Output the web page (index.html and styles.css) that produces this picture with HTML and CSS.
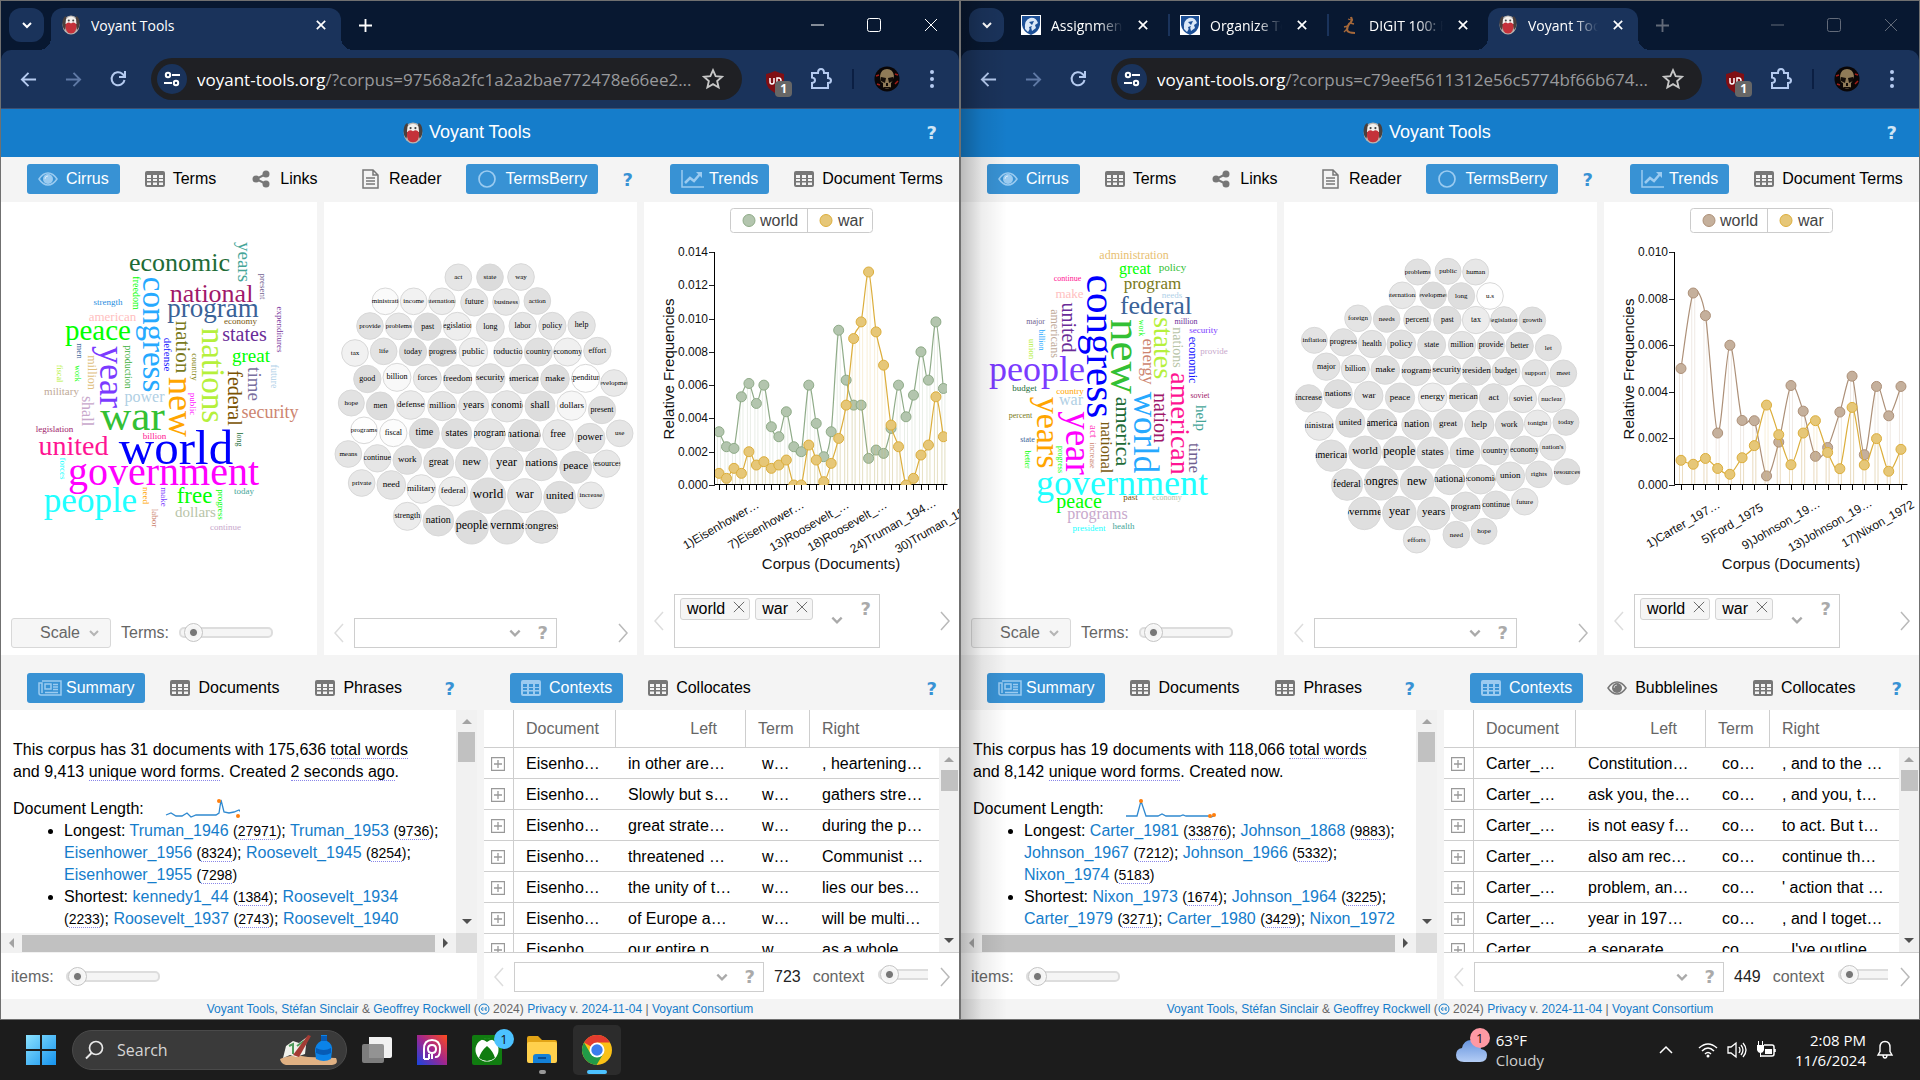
FILE: index.html
```html
<!DOCTYPE html>
<html lang="en">
<head>
<meta charset="utf-8">
<title>Voyant Tools</title>
<link rel="stylesheet" href="styles.css">
</head>
<body>
<svg class="sprite" aria-hidden="true">
  <symbol id="voyant" viewBox="0 0 20 20"><ellipse cx="10" cy="10" rx="8.500" ry="9.500" fill="#b9b4b0"/><path d="M5 1Q2 2 1.500 7T4 15L6 7zM15 1q3 1 3.500 6T16 15L14 7z" fill="#4a403d"/><path d="M5 4Q10-1 15 4L15.500 9h-11z" fill="#f4f1ee"/><path d="M4.500 9.500Q7 6 10 8.500 13 6 15.500 9.500 16 18.500 10 18.500 4 18.500 4.500 9.500z" fill="#c4313a"/><circle cx="7.800" cy="5.500" r="1" fill="#444"/><circle cx="12.200" cy="5.500" r="1" fill="#444"/></symbol>
  <symbol id="lion" viewBox="0 0 20 20"><path d="M0 0h20v20H0z" fill="#fff"/><path d="M1 1h18v9q-1 7-9 10Q2 17 1 10z" fill="#1c4f96"/><path d="M4 14Q3 5 9 3q6-1 8 5l-3 2 1 3-4 3-1-4-3 5z" fill="#dbe8f7"/><path d="M8 7l5-1-2 4zM8 12l3-1-2 4z" fill="#1c4f96"/></symbol>
  <symbol id="lizard" viewBox="0 0 20 20"><path d="M12 2l1 3q-1 3-3 4-2 3-2 6 1 3 8 3" fill="none" stroke="#a5683a" stroke-width="2.200"/><path d="M12 5l-3-1M11 8l4 1M9 11l-4 1M8 14l-3 3" fill="none" stroke="#a5683a" stroke-width="1.300"/></symbol>
  <symbol id="down" viewBox="0 0 12 12"><path d="M2 4l4 4 4-4" fill="none" stroke="currentColor" stroke-width="2"/></symbol>
  <symbol id="x" viewBox="0 0 12 12"><path d="M1 1l10 10M11 1L1 11" fill="none" stroke="currentColor" stroke-width="2"/></symbol>
  <symbol id="xthin" viewBox="0 0 14 14"><path d="M1 1l12 12M13 1L1 13" fill="none" stroke="currentColor"/></symbol>
  <symbol id="plus" viewBox="0 0 14 14"><path d="M7 0v14M0 7h14" fill="none" stroke="currentColor" stroke-width="2"/></symbol>
  <symbol id="min" viewBox="0 0 14 14"><path d="M1 7h13" stroke="currentColor"/></symbol>
  <symbol id="max" viewBox="0 0 14 14"><rect x=".5" y=".5" width="13" height="13" rx="2" fill="none" stroke="currentColor"/></symbol>
  <symbol id="back" viewBox="0 0 18 18"><path d="M17 9H2M9 2L2 9l7 7" fill="none" stroke="currentColor" stroke-width="2"/></symbol>
  <symbol id="fwd" viewBox="0 0 18 18"><path d="M1 9h15M9 2l7 7-7 7" fill="none" stroke="currentColor" stroke-width="2"/></symbol>
  <symbol id="reload" viewBox="0 0 18 18"><path d="M15.500 10a6.500 6.500 0 1 1-2-6l3 3M16 1v6h-6" fill="none" stroke="currentColor" stroke-width="2"/></symbol>
  <symbol id="tune" viewBox="0 0 18 18"><g fill="none" stroke="currentColor" stroke-width="2"><circle cx="5" cy="5" r="2.200"/><path d="M9 5h8M1 13h8"/><circle cx="13" cy="13" r="2.200"/></g></symbol>
  <symbol id="star" viewBox="0 0 20 20"><path d="M10 2l2.400 5.400 5.800.6-4.400 3.900 1.300 5.800L10 14.700l-5.100 3 1.300-5.800L1.800 8l5.800-.6z" fill="none" stroke="currentColor" stroke-width="1.700"/></symbol>
  <symbol id="ublock" viewBox="0 0 28 28"><path d="M11 2q4 2 9 3v7q0 7-9 12-9-5-9-12V5q5-1 9-3z" fill="#800f14"/><path d="M6 9v4q0 2 2 2t2-2V9M13 15V9h2q2 0 2 3" fill="none" stroke="#fff" stroke-width="1.500"/><rect x="11" y="12" width="17" height="16" rx="4" fill="#666"/></symbol>
  <symbol id="puzzle" viewBox="0 0 22 22"><path d="M2 5h6q0-4 3-4t3 4h4v5q3 0 3 2.500T18 15v5H2v-5q3-.3 3-2.700T2 9.500z" fill="none" stroke="currentColor" stroke-width="2"/></symbol>
  <symbol id="skull" viewBox="0 0 26 26"><circle cx="13" cy="13" r="12.500" fill="#0a0606"/><path d="M6 10Q7 3 13 3t7 7l-2 6-1 1v4q-4 3-8 0v-4l-2-1z" fill="#8f7b58"/><path d="M7 11l5 1-1 5-4-2zM19 11l-5 1 1 5 4-2zM12 17h2v3h-2zM10 21h6v1h-6z" fill="#120c08"/><path d="M2 10l3-1M3 18l3 1M21 18l3-3M21 8l3 1" stroke="#a01c18" stroke-width="1.500"/></symbol>
  <symbol id="dots" viewBox="0 0 6 20"><g fill="currentColor"><circle cx="3" cy="3" r="2"/><circle cx="3" cy="10" r="2"/><circle cx="3" cy="17" r="2"/></g></symbol>
  <symbol id="eye" viewBox="0 0 20 16"><path d="M1 8q4-6 9-6t9 6q-4 6-9 6T1 8z" fill="none" stroke="currentColor" stroke-width="1.500"/><circle cx="10" cy="8" r="5" fill="currentColor"/><path d="M7 8q0-3 3-3" fill="none" stroke="#fff" stroke-opacity=".6"/></symbol>
  <symbol id="grid" viewBox="0 0 20 16"><path d="M2 0h16q2 0 2 2v12q0 2-2 2H2q-2 0-2-2V2Q0 0 2 0zM2 4v3h4V4zm6 0v3h4V4zm6 0v3h4V4zM2 8v2h4V8zm6 0v2h4V8zm6 0v2h4V8zM2 11.500V14h4v-2.500zm6 0V14h4v-2.500zm6 0V14h4v-2.500z" fill="currentColor" fill-rule="evenodd"/></symbol>
  <symbol id="share" viewBox="0 0 20 18"><g fill="currentColor"><circle cx="4" cy="9" r="3.500"/><circle cx="14" cy="4" r="3.500"/><circle cx="14" cy="14" r="3.500"/></g><path d="M14 4L4 9l10 5" fill="none" stroke="currentColor" stroke-width="2"/></symbol>
  <symbol id="doc" viewBox="0 0 20 20"><path d="M2 1h10l5 5v13H2zM12 1v5h5M5 9h9M5 12h9M5 15h9" fill="none" stroke="currentColor" stroke-width="1.500"/></symbol>
  <symbol id="ring" viewBox="0 0 20 20"><circle cx="10" cy="10" r="8" fill="none" stroke="currentColor" stroke-width="1.700"/></symbol>
  <symbol id="trend" viewBox="0 0 24 18"><path d="M1 0v17h22" fill="none" stroke="currentColor" stroke-width="1.500"/><path d="M4 13l5-5 4 3 6-7" fill="none" stroke="currentColor" stroke-width="2.500"/><path d="M15 2h6v6z" fill="currentColor"/></symbol>
  <symbol id="news" viewBox="0 0 24 16"><path d="M4 1h19v14H3q-2 0-2-2V3h3v10M7 4h6v5H7zM15 4.500h5M15 7h5M15 9.500h5M7 12.500h13" fill="none" stroke="currentColor" stroke-width="1.500"/></symbol>
  <symbol id="prev" viewBox="0 0 10 20"><path d="M9 1L1 10l8 9" fill="none" stroke="currentColor" stroke-width="1.500"/></symbol>
  <symbol id="next" viewBox="0 0 10 20"><path d="M1 1l8 9-8 9" fill="none" stroke="currentColor" stroke-width="1.500"/></symbol>
  <symbol id="cc" viewBox="0 0 12 12"><circle cx="6" cy="6" r="5" fill="none" stroke="currentColor"/><path d="M5.500 5q-2-1-2 1t2 1M9 5Q7 4 7 6t2 1" fill="none" stroke="currentColor"/></symbol>
  <symbol id="expand" viewBox="0 0 14 14"><path d="M.5.500h13v13H.5zM7 3v8M3 7h8" fill="none" stroke="#999" stroke-width="1.300"/></symbol>
</svg>

<div class="desktop">
<section class="window" aria-label="Voyant Tools, Eisenhower to Truman corpus">
  <header class="strip">
    <button class="tab-search" aria-label="Search tabs"><svg width="12" height="12"><use href="#down"/></svg></button>
    <div class="tab active wide"><svg width="20" height="20"><use href="#voyant"/></svg><span class="tab-title">Voyant Tools</span><button aria-label="Close tab"><svg width="10" height="10"><use href="#x"/></svg></button></div>
    <button class="new-tab" aria-label="New tab"><svg width="13" height="13"><use href="#plus"/></svg></button>
    <div class="controls"><button aria-label="Minimize"><svg width="14" height="14"><use href="#min"/></svg></button><button aria-label="Maximize"><svg width="14" height="14"><use href="#max"/></svg></button><button aria-label="Close"><svg width="14" height="14"><use href="#xthin"/></svg></button></div>
  </header>
  <div class="navbar">
    <button aria-label="Back"><svg width="17" height="17"><use href="#back"/></svg></button>
    <button class="dim" aria-label="Forward"><svg width="17" height="17"><use href="#fwd"/></svg></button>
    <button aria-label="Reload"><svg width="18" height="18"><use href="#reload"/></svg></button>
    <div class="address"><span class="site"><svg width="18" height="18"><use href="#tune"/></svg></span><span class="url"><b>voyant-tools.org</b>/?corpus=97568a2fc1a2a2bae772478e66ee2...</span><svg class="fav" width="22" height="22"><use href="#star"/></svg></div>
    <div class="extensions"><span class="ublock"><svg width="28" height="28"><use href="#ublock"/></svg><i>1</i></span><svg width="22" height="22"><use href="#puzzle"/></svg><span class="rule"></span><svg width="26" height="26"><use href="#skull"/></svg><svg width="6" height="20"><use href="#dots"/></svg></div>
  </div>
  <div class="banner"><h1><svg width="22" height="22"><use href="#voyant"/></svg>Voyant Tools</h1><button class="help" aria-label="Help">?</button></div>
  <div class="page">
    <div class="row three">
      <div class="pane">
        <nav class="tools"><button class="on"><svg width="20" height="16"><use href="#eye"/></svg>Cirrus</button><button><svg width="20" height="16"><use href="#grid"/></svg>Terms</button><button><svg width="20" height="18"><use href="#share"/></svg>Links</button></nav>
        <div class="panel"><svg class="view cloud" viewBox="1 2 316 404" preserveAspectRatio="xMinYMin meet" data-cloud="left"></svg>
          <div class="bar"><button class="scale">Scale<svg width="12" height="12"><use href="#down"/></svg></button><label for="t1">Terms:</label><input class="terms" id="t1" type="range" value="4"></div></div>
      </div>
      <div class="pane">
        <nav class="tools full"><button><svg width="20" height="20"><use href="#doc"/></svg>Reader</button><button class="on"><svg width="20" height="20"><use href="#ring"/></svg>TermsBerry</button><button class="help" aria-label="Help">?</button></nav>
        <div class="panel"><svg class="view berry" viewBox="4 -38 313 404" preserveAspectRatio="xMinYMin meet" data-berry="left"></svg>
          <div class="bar"><button class="page-btn faint" aria-label="Previous"><svg width="10" height="20"><use href="#prev"/></svg></button><div class="combo mid"><input aria-label="Search terms"><svg width="14" height="14"><use href="#down"/></svg><b>?</b></div><button class="page-btn end" aria-label="Next"><svg width="10" height="20"><use href="#next"/></svg></button></div></div>
      </div>
      <div class="pane">
        <nav class="tools"><button class="on big"><svg width="24" height="18"><use href="#trend"/></svg>Trends</button><button><svg width="20" height="16"><use href="#grid"/></svg>Document Terms</button></nav>
        <div class="panel"><svg class="view chart" viewBox="4 2 315 380" preserveAspectRatio="xMinYMin meet" data-chart="left"></svg>
          <div class="bar tall"><button class="page-btn faint" aria-label="Previous"><svg width="10" height="20"><use href="#prev"/></svg></button><div class="combo tags"><span>world<svg width="12" height="12"><use href="#xthin"/></svg></span><span>war<svg width="12" height="12"><use href="#xthin"/></svg></span><input aria-label="Add term"><svg class="drop" width="14" height="14"><use href="#down"/></svg><b>?</b></div><button class="page-btn end" aria-label="Next"><svg width="10" height="20"><use href="#next"/></svg></button></div></div>
      </div>
    </div>
    <div class="row two">
      <div class="pane">
        <nav class="tools low"><button class="on big"><svg width="24" height="16"><use href="#news"/></svg>Summary</button><button><svg width="20" height="16"><use href="#grid"/></svg>Documents</button><button><svg width="20" height="16"><use href="#grid"/></svg>Phrases</button><button class="help" aria-label="Help">?</button></nav>
        <div class="panel">
          <div class="scroller"><div class="summary">
            <p>This corpus has 31 documents with 175,636 <u>total words</u> and 9,413 <u>unique word forms</u>. Created <u>2 seconds ago</u>.</p>
            <div>Document Length: <svg class="spark" width="78" height="22"><path d="M4 17l5-2 5 3h6l5-3 4 4 5-2h20l3-2 2-13 3 12 5 1 5-1 5-2 3 3" fill="none" stroke="#2f89d0" stroke-width="1.300"/><circle cx="57" cy="3" r="2" fill="#ff7f0e"/><circle cx="76" cy="18" r="2" fill="#ff7f0e"/></svg></div>
            <ul><li>Longest: <a href="#">Truman_1946</a> <small>(<u>27971</u>)</small>; <a href="#">Truman_1953</a> <small>(<u>9736</u>)</small>; <a href="#">Eisenhower_1956</a> <small>(<u>8324</u>)</small>; <a href="#">Roosevelt_1945</a> <small>(<u>8254</u>)</small>; <a href="#">Eisenhower_1955</a> <small>(<u>7298</u>)</small></li>
            <li>Shortest: <a href="#">kennedy1_44</a> <small>(<u>1384</u>)</small>; <a href="#">Roosevelt_1934</a> <small>(<u>2233</u>)</small>; <a href="#">Roosevelt_1937</a> <small>(<u>2743</u>)</small>; <a href="#">Roosevelt_1940</a></li></ul>
          </div><div class="vscroll"><i class="up"></i><span></span><i class="dn"></i></div><div class="hscroll"><i class="lt"></i><span></span><i class="rt"></i></div><div class="corner"></div></div>
          <div class="bar"><label for="i1">items:</label><input class="items" id="i1" type="range" value="0"></div></div>
      </div>
      <div class="pane">
        <nav class="tools low"><button class="on"><svg width="20" height="16"><use href="#grid"/></svg>Contexts</button><button><svg width="20" height="16"><use href="#grid"/></svg>Collocates</button><button class="help" aria-label="Help">?</button></nav>
        <div class="panel">
          <div class="records"><table><thead><tr><th class="c0"></th><th class="c1">Document</th><th class="c2">Left</th><th class="c3">Term</th><th>Right</th></tr></thead><tbody>
            <tr><td><svg width="14" height="14"><use href="#expand"/></svg></td><td>Eisenho…</td><td>in other are…</td><td>w…</td><td>, heartening…</td></tr>
            <tr><td><svg width="14" height="14"><use href="#expand"/></svg></td><td>Eisenho…</td><td>Slowly but s…</td><td>w…</td><td>gathers stre…</td></tr>
            <tr><td><svg width="14" height="14"><use href="#expand"/></svg></td><td>Eisenho…</td><td>great strate…</td><td>w…</td><td>during the p…</td></tr>
            <tr><td><svg width="14" height="14"><use href="#expand"/></svg></td><td>Eisenho…</td><td>threatened …</td><td>w…</td><td>Communist …</td></tr>
            <tr><td><svg width="14" height="14"><use href="#expand"/></svg></td><td>Eisenho…</td><td>the unity of t…</td><td>w…</td><td>lies our bes…</td></tr>
            <tr><td><svg width="14" height="14"><use href="#expand"/></svg></td><td>Eisenho…</td><td>of Europe a…</td><td>w…</td><td>will be multi…</td></tr>
            <tr><td><svg width="14" height="14"><use href="#expand"/></svg></td><td>Eisenho…</td><td>our entire p…</td><td>w…</td><td>as a whole…</td></tr>
          </tbody></table><div class="vscroll over"><i class="up"></i><span></span><i class="dn"></i></div></div>
          <div class="bar"><button class="page-btn faint" aria-label="Previous"><svg width="10" height="20"><use href="#prev"/></svg></button><div class="combo long"><input aria-label="Search contexts"><svg width="14" height="14"><use href="#down"/></svg><b>?</b></div><span class="count">723</span><label for="c1">context</label><span class="clip"><input id="c1" type="range" value="0"></span><button class="page-btn end" aria-label="Next"><svg width="10" height="20"><use href="#next"/></svg></button></div></div>
      </div>
    </div>
    <footer><a href="#">Voyant Tools</a>, <a href="#">Stéfan Sinclair</a> &amp; <a href="#">Geoffrey Rockwell</a> (<a href="#" aria-label="Creative Commons"><svg width="12" height="12"><use href="#cc"/></svg></a> 2024) <a href="#">Privacy</a> v. <a href="#">2024-11-04</a> | <a href="#">Voyant Consortium</a></footer>
  </div>
</section>

<section class="window inactive" aria-label="Voyant Tools, Carter to Nixon corpus">
  <header class="strip">
    <button class="tab-search" aria-label="Search tabs"><svg width="12" height="12"><use href="#down"/></svg></button>
    <div class="tab"><svg width="20" height="20"><use href="#lion"/></svg><span class="tab-title">Assignments</span><button aria-label="Close tab"><svg width="10" height="10"><use href="#x"/></svg></button></div>
    <div class="tab"><svg width="20" height="20"><use href="#lion"/></svg><span class="tab-title">Organize Text</span><button aria-label="Close tab"><svg width="10" height="10"><use href="#x"/></svg></button></div>
    <div class="tab last"><svg width="20" height="20"><use href="#lizard"/></svg><span class="tab-title">DIGIT 100: Fall</span><button aria-label="Close tab"><svg width="10" height="10"><use href="#x"/></svg></button></div>
    <div class="tab active"><svg width="20" height="20"><use href="#voyant"/></svg><span class="tab-title">Voyant Tools</span><button aria-label="Close tab"><svg width="10" height="10"><use href="#x"/></svg></button></div>
    <button class="new-tab" aria-label="New tab"><svg width="13" height="13"><use href="#plus"/></svg></button>
    <div class="controls"><button aria-label="Minimize"><svg width="14" height="14"><use href="#min"/></svg></button><button aria-label="Maximize"><svg width="14" height="14"><use href="#max"/></svg></button><button aria-label="Close"><svg width="14" height="14"><use href="#xthin"/></svg></button></div>
  </header>
  <div class="navbar">
    <button aria-label="Back"><svg width="17" height="17"><use href="#back"/></svg></button>
    <button class="dim" aria-label="Forward"><svg width="17" height="17"><use href="#fwd"/></svg></button>
    <button aria-label="Reload"><svg width="18" height="18"><use href="#reload"/></svg></button>
    <div class="address"><span class="site"><svg width="18" height="18"><use href="#tune"/></svg></span><span class="url"><b>voyant-tools.org</b>/?corpus=c79eef5611312e56c5774bf66b674...</span><svg class="fav" width="22" height="22"><use href="#star"/></svg></div>
    <div class="extensions"><span class="ublock"><svg width="28" height="28"><use href="#ublock"/></svg><i>1</i></span><svg width="22" height="22"><use href="#puzzle"/></svg><span class="rule"></span><svg width="26" height="26"><use href="#skull"/></svg><svg width="6" height="20"><use href="#dots"/></svg></div>
  </div>
  <div class="banner"><h1><svg width="22" height="22"><use href="#voyant"/></svg>Voyant Tools</h1><button class="help" aria-label="Help">?</button></div>
  <div class="page">
    <div class="row three">
      <div class="pane">
        <nav class="tools"><button class="on"><svg width="20" height="16"><use href="#eye"/></svg>Cirrus</button><button><svg width="20" height="16"><use href="#grid"/></svg>Terms</button><button><svg width="20" height="18"><use href="#share"/></svg>Links</button></nav>
        <div class="panel"><svg class="view cloud" viewBox="1 2 316 404" preserveAspectRatio="xMinYMin meet" data-cloud="right"></svg>
          <div class="bar"><button class="scale">Scale<svg width="12" height="12"><use href="#down"/></svg></button><label for="t2">Terms:</label><input class="terms" id="t2" type="range" value="4"></div></div>
      </div>
      <div class="pane">
        <nav class="tools full"><button><svg width="20" height="20"><use href="#doc"/></svg>Reader</button><button class="on"><svg width="20" height="20"><use href="#ring"/></svg>TermsBerry</button><button class="help" aria-label="Help">?</button></nav>
        <div class="panel"><svg class="view berry" viewBox="4 -38 313 404" preserveAspectRatio="xMinYMin meet" data-berry="right"></svg>
          <div class="bar"><button class="page-btn faint" aria-label="Previous"><svg width="10" height="20"><use href="#prev"/></svg></button><div class="combo mid"><input aria-label="Search terms"><svg width="14" height="14"><use href="#down"/></svg><b>?</b></div><button class="page-btn end" aria-label="Next"><svg width="10" height="20"><use href="#next"/></svg></button></div></div>
      </div>
      <div class="pane">
        <nav class="tools"><button class="on big"><svg width="24" height="18"><use href="#trend"/></svg>Trends</button><button><svg width="20" height="16"><use href="#grid"/></svg>Document Terms</button></nav>
        <div class="panel"><svg class="view chart" viewBox="4 2 315 380" preserveAspectRatio="xMinYMin meet" data-chart="right"></svg>
          <div class="bar tall"><button class="page-btn faint" aria-label="Previous"><svg width="10" height="20"><use href="#prev"/></svg></button><div class="combo tags"><span>world<svg width="12" height="12"><use href="#xthin"/></svg></span><span>war<svg width="12" height="12"><use href="#xthin"/></svg></span><input aria-label="Add term"><svg class="drop" width="14" height="14"><use href="#down"/></svg><b>?</b></div><button class="page-btn end" aria-label="Next"><svg width="10" height="20"><use href="#next"/></svg></button></div></div>
      </div>
    </div>
    <div class="row two">
      <div class="pane">
        <nav class="tools low"><button class="on big"><svg width="24" height="16"><use href="#news"/></svg>Summary</button><button><svg width="20" height="16"><use href="#grid"/></svg>Documents</button><button><svg width="20" height="16"><use href="#grid"/></svg>Phrases</button><button class="help" aria-label="Help">?</button></nav>
        <div class="panel">
          <div class="scroller"><div class="summary">
            <p>This corpus has 19 documents with 118,066 <u>total words</u> and 8,142 <u>unique word forms</u>. Created now.</p>
            <div>Document Length: <svg class="spark" width="94" height="22"><path d="M4 18h11l4-15 5 15h12l4-2 4 2h14l3-1 3 1h22l3 1 3-1" fill="none" stroke="#2f89d0" stroke-width="1.300"/><circle cx="19" cy="3" r="2" fill="#ff7f0e"/><circle cx="88" cy="18" r="2" fill="#ff7f0e"/><circle cx="92" cy="17" r="2" fill="#ff7f0e"/></svg></div>
            <ul><li>Longest: <a href="#">Carter_1981</a> <small>(<u>33876</u>)</small>; <a href="#">Johnson_1868</a> <small>(<u>9883</u>)</small>; <a href="#">Johnson_1967</a> <small>(<u>7212</u>)</small>; <a href="#">Johnson_1966</a> <small>(<u>5332</u>)</small>; <a href="#">Nixon_1974</a> <small>(<u>5183</u>)</small></li>
            <li>Shortest: <a href="#">Nixon_1973</a> <small>(<u>1674</u>)</small>; <a href="#">Johnson_1964</a> <small>(<u>3225</u>)</small>; <a href="#">Carter_1979</a> <small>(<u>3271</u>)</small>; <a href="#">Carter_1980</a> <small>(<u>3429</u>)</small>; <a href="#">Nixon_1972</a></li></ul>
          </div><div class="vscroll"><i class="up"></i><span></span><i class="dn"></i></div><div class="hscroll"><i class="lt"></i><span></span><i class="rt"></i></div><div class="corner"></div></div>
          <div class="bar"><label for="i2">items:</label><input class="items" id="i2" type="range" value="0"></div></div>
      </div>
      <div class="pane">
        <nav class="tools low full"><button class="on"><svg width="20" height="16"><use href="#grid"/></svg>Contexts</button><button><svg width="20" height="16"><use href="#eye"/></svg>Bubblelines</button><button><svg width="20" height="16"><use href="#grid"/></svg>Collocates</button><button class="help" aria-label="Help">?</button></nav>
        <div class="panel">
          <div class="records"><table><thead><tr><th class="c0"></th><th class="c1">Document</th><th class="c2">Left</th><th class="c3">Term</th><th>Right</th></tr></thead><tbody>
            <tr><td><svg width="14" height="14"><use href="#expand"/></svg></td><td>Carter_…</td><td>Constitution…</td><td>co…</td><td>, and to the …</td></tr>
            <tr><td><svg width="14" height="14"><use href="#expand"/></svg></td><td>Carter_…</td><td>ask you, the…</td><td>co…</td><td>, and you, t…</td></tr>
            <tr><td><svg width="14" height="14"><use href="#expand"/></svg></td><td>Carter_…</td><td>is not easy f…</td><td>co…</td><td>to act. But t…</td></tr>
            <tr><td><svg width="14" height="14"><use href="#expand"/></svg></td><td>Carter_…</td><td>also am rec…</td><td>co…</td><td>continue th…</td></tr>
            <tr><td><svg width="14" height="14"><use href="#expand"/></svg></td><td>Carter_…</td><td>problem, an…</td><td>co…</td><td>' action that …</td></tr>
            <tr><td><svg width="14" height="14"><use href="#expand"/></svg></td><td>Carter_…</td><td>year in 197…</td><td>co…</td><td>, and I toget…</td></tr>
            <tr><td><svg width="14" height="14"><use href="#expand"/></svg></td><td>Carter_…</td><td>a separate…</td><td>co…</td><td>. I've outline…</td></tr>
          </tbody></table><div class="vscroll over"><i class="up"></i><span></span><i class="dn"></i></div></div>
          <div class="bar"><button class="page-btn faint" aria-label="Previous"><svg width="10" height="20"><use href="#prev"/></svg></button><div class="combo long"><input aria-label="Search contexts"><svg width="14" height="14"><use href="#down"/></svg><b>?</b></div><span class="count">449</span><label for="c2">context</label><span class="clip"><input id="c2" type="range" value="0"></span><button class="page-btn end" aria-label="Next"><svg width="10" height="20"><use href="#next"/></svg></button></div></div>
      </div>
    </div>
    <footer><a href="#">Voyant Tools</a>, <a href="#">Stéfan Sinclair</a> &amp; <a href="#">Geoffrey Rockwell</a> (<a href="#" aria-label="Creative Commons"><svg width="12" height="12"><use href="#cc"/></svg></a> 2024) <a href="#">Privacy</a> v. <a href="#">2024-11-04</a> | <a href="#">Voyant Consortium</a></footer>
  </div>
</section>
</div>

<div class="taskbar">
  <button aria-label="Start"><svg width="30" height="30" viewBox="0 0 30 30"><defs><linearGradient id="win" x2="1" y2="1"><stop stop-color="#8be2ff"/><stop offset="1" stop-color="#1593ee"/></linearGradient></defs><path d="M0 0h14v14H0zM16 0h14v14H16zM0 16h14v14H0zM16 16h14v14H16z" fill="url(#win)"/></svg></button>
  <label class="search"><svg width="20" height="20" viewBox="0 0 20 20"><circle cx="11" cy="8" r="6.500" fill="none" stroke="#e8e8e8" stroke-width="1.700"/><path d="M6.500 13L1 18.500" stroke="#e8e8e8" stroke-width="2"/></svg><input placeholder="Search">
    <svg class="art" width="58" height="32" viewBox="0 0 58 32"><path d="M0 25q12-6 28-2l28 1q3 6-4 7H6q-5-1-6-6z" fill="#e0b183"/><path d="M6 12l7-5 6 2 8-6-2 17-9 3-6-2-7 3z" fill="#f1f2ec"/><path d="M9 12l4-2v10M17 12l7-5" stroke="#4e9a5b" fill="none" stroke-width="2"/><path d="M13 21L28 1l3 1-12 21z" fill="#a33b34"/><path d="M41 1h6v6q6 3 5 10l-1 8q-7 4-15 0l-1-8q0-7 6-10z" fill="#0b83e8"/><path d="M41 2h6v5h-6zM36 14q8 4 15 0v5q-7 4-15 0z" fill="#075bb5"/></svg></label>
  <button class="app" aria-label="Task view"><svg width="30" height="30" viewBox="0 0 30 30"><path d="M7 2h21q2 0 2 2v17q0 2-2 2H7z" fill="#f1f1f1"/><rect y="9" width="22" height="19" rx="2" fill="#888" fill-opacity=".9"/></svg></button>
  <button class="app" aria-label="Media app"><svg width="30" height="30" viewBox="0 0 30 30"><defs><linearGradient id="ap" x1="0" y1="1" x2="1" y2="0"><stop stop-color="#1746e0"/><stop offset=".5" stop-color="#a0268f"/><stop offset="1" stop-color="#ff4a1c"/></linearGradient></defs><rect width="30" height="30" fill="url(#ap)"/><path d="M7 24V14q0-9 8-9t8 9-5 8M7 24h5M15 10q4 0 4 4t-4 4-4-4 4-4zM12 24v-5M15 18v6" fill="none" stroke="#fff" stroke-width="2"/></svg></button>
  <button class="app" aria-label="Xbox"><svg width="30" height="30" viewBox="0 0 30 30"><rect width="30" height="30" rx="2" fill="#107c10"/><circle cx="15" cy="15" r="11.500" fill="#fff"/><path d="M8 5q3-1 7 2 4-3 7-2-3-2-7-2T8 5zM15 11q6 5 8 12-8 6-16 0 2-7 8-12z" fill="#107c10"/></svg><em>1</em></button>
  <button class="app" aria-label="File Explorer"><svg width="32" height="28" viewBox="0 0 32 28"><path d="M1 2Q1 0 3 0h9l4 4h13q2 0 2 2v6H1z" fill="#e2a416"/><rect x="1" y="6" width="30" height="21" rx="2" fill="#ffd04c"/><path d="M7 27v-6q0-3 3-3h12q3 0 3 3v6z" fill="#1481d8"/><path d="M12 22h8" stroke="#084c91" stroke-width="2"/></svg><s></s></button>
  <button class="app current" aria-label="Chrome"><svg width="30" height="30" viewBox="0 0 30 30"><circle cx="15" cy="15" r="15" fill="#fbc116"/><path d="M15 15L2 7.500A15 15 0 0 1 28 7.500H15z" fill="#e33b2e"/><path d="M2 7.500A15 15 0 0 0 14.500 30L21.500 18.500 15 15 8.500 18.500z" fill="#229a48"/><circle cx="15" cy="15" r="7.500" fill="#fff"/><circle cx="15" cy="15" r="5.700" fill="#3b7ded"/></svg><s class="blue"></s></button>
  <div class="weather"><svg width="32" height="32" viewBox="0 0 32 32"><defs><linearGradient id="cl" y2="1" x2="0"><stop stop-color="#6694de"/><stop offset="1" stop-color="#b4cdf5"/></linearGradient></defs><path d="M8 28q-8 0-8-7 0-6 6-7 2-9 11-8 8 1 8 9 6 1 6 6 0 7-7 7z" fill="url(#cl)"/></svg><em>1</em><div>63°F<br><span>Cloudy</span></div></div>
  <div class="tray"><svg width="14" height="14" viewBox="0 0 14 14"><path d="M1 10l6-6 6 6" fill="none" stroke="#fff" stroke-width="1.500"/></svg>
    <div class="status"><svg width="20" height="20" viewBox="0 0 20 20"><g fill="none" stroke="#fff" stroke-width="1.500"><path d="M1 8q9-8 18 0M4 11q6-6 12 0M7 14q3-3 6 0"/></g><circle cx="10" cy="16" r="1.500" fill="#fff"/></svg><svg width="20" height="20" viewBox="0 0 20 20"><path d="M1 7v6h3l5 4V3L4 7zM12 7q2 3 0 6M14 5q4 5 0 10M16 3q6 7 0 14" fill="none" stroke="#fff" stroke-width="1.300"/></svg><svg width="20" height="20" viewBox="0 0 20 20"><path d="M8 5h8q2 0 2 2v7q0 2-2 2H5M19 9v3" fill="none" stroke="#fff" stroke-width="1.500"/><path d="M9 9h7v5H9zM1 5h7v5q-1 3-3.500 3T1 10zM2 1h1v4H2zM6 1h1v4H6zM4 12h1v5H4z" fill="#fff"/></svg></div>
    <div class="clock">2:08 PM<br>11/6/2024</div>
    <svg width="18" height="20" viewBox="0 0 18 20"><path d="M9 1.500q5 0 5 6v4l2 3.500H2l2-3.500v-4q0-6 5-6zM7 15q0 3 2 3t2-3" fill="none" stroke="#fff" stroke-width="1.400"/></svg></div>
</div>
<script src="charts.js"></script>
</body>
</html>
```
FILE: styles.css
```css
* { box-sizing: border-box; }
body { margin: 0; height: 100vh; display: flex; flex-direction: column; overflow: hidden; background: #1c1c1c; font: 16px "Liberation Sans", Arial, sans-serif; color: #000; }
button { border: 0; background: none; padding: 0; font: inherit; color: inherit; display: flex; align-items: center; justify-content: center; }
a { color: #157dcb; text-decoration: none; }
svg { flex: none; display: block; }
.sprite { position: absolute; width: 0; height: 0; }

.desktop { flex: 1; min-height: 0; display: grid; grid-template-columns: 1fr 1fr; }
.window { position: relative; min-width: 0; min-height: 0; display: flex; flex-direction: column; overflow: hidden; border: 1px solid #707070; background: #081831; }
.inactive::after { content: ""; position: absolute; inset: 0 auto 0 0; width: 46px; background: linear-gradient(90deg, rgba(0,0,0,.24), rgba(0,0,0,.07) 45%, transparent); pointer-events: none; }

/* browser frame */
.strip { flex: none; height: 49px; display: flex; align-items: flex-start; padding: 7px 0 0 8px; color: #fff; font: 14px "Open Sans", "Noto Sans", sans-serif; }
.tab-search { width: 35px; height: 34px; margin-right: 7px; border-radius: 12px; background: #1a335b; }
.tab { position: relative; display: flex; align-items: center; width: 159px; height: 34px; padding: 0 20px 0 10px; gap: 10px; }
.tab.wide.wide { width: 290px; padding-right: 15px; }
.tab:not(.active):not(.last) { border-right: 2px solid #1a335b; border-image: linear-gradient(transparent 20%, #1a335b 20%, #1a335b 80%, transparent 80%) 1; }
.tab.active { width: 150px; height: 42px; padding: 0 15px 8px 10px; background: #1a335b; border-radius: 12px 12px 0 0; }
.tab.active::before, .tab.active::after { content: ""; position: absolute; bottom: 0; width: 12px; height: 12px; background: radial-gradient(circle at 0 0, transparent 12px, #1a335b 12px); }
.tab.active::before { left: -12px; }
.tab.active::after { right: -12px; background: radial-gradient(circle at 100% 0, transparent 12px, #1a335b 12px); }
.tab-title { flex: 1; min-width: 0; overflow: hidden; white-space: nowrap; margin-right: 5px; }
.tab:not(.wide) .tab-title { mask-image: linear-gradient(90deg, #000 65%, transparent); }
.new-tab { width: 25px; height: 34px; margin-left: 12px; }
.controls { margin-left: auto; display: flex; gap: 43px; padding-right: 21px; height: 34px; }
.inactive .new-tab, .inactive .controls { color: #626a79; }
.navbar { flex: none; height: 59px; display: flex; align-items: center; padding-left: 18px; border-bottom: 1px solid #3c5072; border-radius: 10px 10px 0 0; background: #1a335b; color: #b5cbf0; }
.navbar > button { width: 18px; margin-right: 27px; }
.navbar .dim { color: #5f79a5; }
.address { flex: 1; min-width: 0; height: 42px; margin-left: -3px; display: flex; align-items: center; border-radius: 21px; background: #1f2024; padding: 0 18px 0 6px; }
.site { width: 30px; height: 30px; border-radius: 15px; background: #1a335b; color: #fff; display: grid; place-items: center; margin-right: 10px; }
.url { flex: 1; min-width: 0; overflow: hidden; white-space: nowrap; font: 17px "Open Sans", "Noto Sans", sans-serif; color: #98999c; }
.url b { font-weight: 400; color: #fff; }
.fav { color: #c7c7c7; }
.extensions { display: flex; align-items: center; padding: 0 24px 0 22px; color: #b5cbf0; }
.ublock { position: relative; margin-right: 18px; }
.ublock svg { margin-top: 8px; }
.ublock i { position: absolute; right: 5px; bottom: 0; font: 700 12px "Open Sans", sans-serif; color: #fff; }
.rule { width: 2px; height: 20px; background: #0b1f43; margin: 0 20px; }
.extensions svg:last-child { margin-left: 29px; }

/* tool header */
.banner { flex: none; height: 48px; display: flex; align-items: center; padding-bottom: 1px; background: #157dcb; color: #fff; }
.banner h1 { flex: 1; display: flex; align-items: center; justify-content: center; gap: 5px; margin: 0 0 0 5px; font-size: 18px; font-weight: 400; }
.help, .combo b { font: 700 18px "DejaVu Sans", sans-serif; }
.banner .help { margin-right: 22px; color: #d0e5f5; }

.page { flex: 1; min-height: 0; display: grid; grid-template-rows: 498fr 344fr 20px; background: #f4f4f4; }
.row { min-height: 0; display: grid; gap: 7px; }
.three { grid-template-columns: 316fr 313fr 315fr; }
.two { grid-template-columns: 476fr 475fr; }
.pane { min-width: 0; min-height: 0; display: flex; flex-direction: column; }
.tools { flex: none; display: flex; gap: 14px; height: 45px; padding: 7px 22px 8px 26px; white-space: nowrap; }
.tools.low { height: 55px; padding-top: 18px; }
.tools.full { padding-right: 4px; }
.tools button { height: 30px; padding: 0 11px; gap: 8px; border-radius: 3px; }
.tools button.big { gap: 4px; }
.tools svg { color: #777; }
.tools .on { background: #3892d4; color: #fff; }
.tools .on svg { color: #9bcbf0; }
.tools button.help { margin-left: auto; padding: 0; color: #3892d4; }
.full.low { gap: 13px; padding-right: 17px; }
.panel { flex: 1; min-height: 0; display: flex; flex-direction: column; background: #fff; }
.view { flex: 1; width: 100%; min-height: 0; }
.cloud, .berry { font-family: "Liberation Serif", "Times New Roman", serif; }

/* toolbars under each panel */
.bar { flex: none; display: flex; align-items: center; height: 46px; padding: 1px 9px 0 10px; color: #666; }
.bar.tall { height: 69px; }
.scale { width: 100px; height: 30px; margin-right: 10px; padding-left: 18px; gap: 8px; border: 1px solid #d8d8d8; border-radius: 3px; background: #f6f6f6; }
.scale svg { color: #b5b5b5; }
.page-btn { color: #b9b9b9; margin-right: 10px; }
.page-btn.faint { color: #ddd; }
.page-btn.end { margin: 0 0 0 auto; }
.combo { display: flex; align-items: center; height: 30px; border: 1px solid #cecece; background: #fff; padding-right: 8px; gap: 16px; color: #aaa; }
.combo input { flex: 1; min-width: 0; border: 0; outline: 0; background: none; }
.combo.mid { width: 203px; }
.combo.long { width: 250px; margin-right: 10px; }
.combo.tags { width: 206px; height: 54px; align-items: flex-start; gap: 5px; padding: 3px 8px 0 5px; }
.tags span { display: flex; align-items: center; height: 22px; padding: 0 4px 0 6px; gap: 8px; border: 1px solid #d4d4d4; border-radius: 3px; background: #f5f5f5; color: #000; }
.tags span svg { color: #555; margin-bottom: 5px; }
.drop { margin: 15px 12px 0 0; }
.count { color: #222; margin-right: 12px; }
.bar input[type=range] { appearance: none; width: 94px; height: 20px; margin: 0 0 0 10px; background: none; }
.bar .items.items { margin-left: 12px; }
.bar input[type=range]::-webkit-slider-runnable-track { height: 11px; border: 2px solid #ddd; border-radius: 5px; background: #f5f5f5; }
.bar input[type=range]::-webkit-slider-thumb { appearance: none; width: 19px; height: 19px; margin-top: -6px; border: 1px solid #c4c4c4; border-radius: 50%; background: radial-gradient(circle, #777 3px, #f2f2f2 4px, #fff); }
.clip { width: 64px; overflow: hidden; padding-left: 4px; }

/* summary */
.scroller { flex: 1; min-height: 0; display: grid; grid-template: minmax(0, 1fr) 20px / minmax(0, 1fr) 21px; }
.summary { overflow: hidden; padding: 29px 15px 0 12px; line-height: 22px; }
.summary p { margin: 0 0 15px; padding-right: 10px; }
.summary u { text-decoration: none; border-bottom: 1px dotted #8a86e8; }
.summary ul { margin: 0; padding-left: 51px; }
.summary small { font-size: 14px; line-height: 16px; }
.spark { display: inline-block; vertical-align: bottom; margin-left: 14px; }
.vscroll, .hscroll { display: flex; align-items: center; background: #f1f1f1; }
.vscroll { flex-direction: column; padding: 9px 0; }
.vscroll span { width: 17px; height: 30px; margin-top: 8px; background: #c1c1c1; }
.vscroll .dn { margin-top: auto; }
.hscroll { padding: 0 8px; }
.hscroll span { flex: 1; height: 17px; margin: 0 8px; background: #c1c1c1; }
.vscroll i, .hscroll i { border: 5px solid transparent; }
.vscroll .up { border-top: 0; border-bottom-color: #a3a3a3; }
.vscroll .dn { border-bottom: 0; border-top-color: #505050; }
.hscroll .lt { border-left: 0; border-right-color: #a3a3a3; }
.hscroll .rt { border-right: 0; border-left-color: #505050; }
.corner { background: #dcdcdc; }

/* contexts grid */
.records { position: relative; flex: 1; min-height: 0; overflow: hidden; border-bottom: 1px solid #cecece; }
.records table { width: 100%; table-layout: fixed; border-collapse: separate; border-spacing: 0; white-space: nowrap; }
.records th { height: 38px; padding: 0 12px; border-right: 1px solid #cecece; border-bottom: 1px solid #cecece; font-weight: 400; color: #666; text-align: left; }
.records th:last-child { border-right: 0; }
.records .c0 { width: 30px; padding: 0; }
.records .c1 { width: 102px; }
.records .c2 { width: 130px; padding-right: 28px; text-align: right; }
.records .c3 { width: 64px; }
.records td { height: 31px; padding: 2px 12px 0; border-bottom: 1px solid #cecece; overflow: hidden; }
.records td:first-child { padding: 2px 0 0 7px; border-right: 1px solid #cecece; }
.records td:nth-child(4) { padding-left: 16px; padding-right: 0; }
.vscroll.over { position: absolute; top: 38px; right: 0; bottom: 0; width: 20px; }
.over span { height: 21px; margin-top: 8px; }

footer { text-align: center; font-size: 12px; line-height: 21px; color: #666; }
footer svg { display: inline-block; vertical-align: -2px; }

/* taskbar */
.taskbar { flex: none; height: 60px; display: flex; align-items: center; padding: 0 26px; background: #1c1c1c; color: #fff; font: 15px "Open Sans", "Noto Sans", sans-serif; }
.search { width: 275px; height: 40px; margin: 0 6px 0 16px; padding: 0 8px 0 12px; display: flex; align-items: center; gap: 10px; border: 1px solid #4a4a4a; border-radius: 20px; background: #3a3a3a; }
.search input { flex: 1; min-width: 0; border: 0; outline: 0; background: none; font: 16px "Open Sans", sans-serif; color: #ddd; }
.search input::placeholder { color: #d5d5d5; }
.app { position: relative; width: 48px; height: 50px; margin-right: 7px; }
.current { background: #2c2c2c; border-radius: 5px; }
.app em, .weather em { position: absolute; width: 20px; height: 20px; border-radius: 10px; font-style: normal; font-size: 13px; line-height: 20px; text-align: center; color: #111; }
.app em { top: 4px; right: -3px; background: #4cc2ff; }
.app s { position: absolute; bottom: 1px; left: 21px; width: 7px; height: 4px; border-radius: 2px; background: #999; }
.app s.blue { left: 14px; width: 20px; background: #4cc2ff; }
.weather { position: relative; margin-left: auto; display: flex; align-items: center; gap: 8px; line-height: 20px; }
.weather em { left: 14px; top: -2px; background: #ff99a4; }
.weather span { color: #ccc; }
.tray { display: flex; align-items: center; gap: 19px; margin-left: 115px; }
.status { display: flex; gap: 9px; }
.clock { text-align: right; line-height: 20px; }
.tray > svg:last-child { margin-left: -9px; }
.tray > svg:first-child { margin-right: 6px; }
```
FILE: charts.js
```js
const NS = "http://www.w3.org/2000/svg";
function add(parent, tag, attrs, text) {
  const node = document.createElementNS(NS, tag);
  for (const key in attrs) node.setAttribute(key, attrs[key]);
  if (text !== undefined) node.textContent = text;
  parent.appendChild(node);
  return node;
}

// Word cloud: word, start, end, baseline, colour, and "v" for words that run downwards.
const clouds = {
left: `economic 129 230 71 #206b36
years 42 82 238 #45a598 v
present 73 100 260 #706090 v
congress 76 193 143 #26a9ff v
freedom 76 110 133 #00ff00 v
national 169 254 102 #a0186a
program 167 259 117 #3a6298
strength 93 123 105 #1f8ee0
american 88 137 121 #ffc0c0
economy 224 257 124 #7a5a10
peace 65 131 140 #00ff00
states 222 267 141 #6a2c98
expenditures 106 153 277 #7a3aa0 v
nation 121 173 176 #7a7a20 v
nations 128 223 202 #b5f03c v
defense 137 172 164 #1010ff v
men 143 159 77 #3a6298 v
year 146 208 100 #7b3bff v
production 145 189 125 #40b040 v
country 153 181 192 #8a8a20 v
great 232 270 162 #00ff00
million 155 190 88 #e0c080 v
fiscal 165 182 57 #b5f03c v
work 165 182 75 #00ff00 v
time 167 201 248 #7a70a0 v
federal 170 226 228 #7a5200 v
future 165 188 271 #b0d0e8 v
military 44 79 195 #c0aa98
shall 196 226 82 #c8a8cc v
power 124 165 202 #b0cfe4
new 177 237 169 #ffa500 v
public 193 215 190 #ff20ff v
war 100 165 230 #33c033
security 242 298 218 #cd8570
legislation 36 73 232 #a0186a
united 38 109 255 #ff1493
billion 143 166 239 #ff1493
world 119 233 264 #0000ff
long 232 247 237 #206b36 v
forces 258 279 60 #20ffff v
government 68 259 285 #ff00ff
people 44 137 312 #20ffff
need 287 304 143 #ffa500 v
make 287 307 161 #7b3bff v
free 177 212 303 #00ff00
progress 289 320 218 #00ff00 v
today 234 254 294 #45a598
labor 309 327 152 #cd8570 v
dollars 175 216 317 #b8c4a8
continue 210 241 330 #c8a8cc`,
right: `administration 138 210 59 #e8c070
great 159 191 74 #00ff00
policy 199 226 71 #33c033
continue 93 122 81 #ff1493
make 95 124 98 #ffc0c0
congress 75 218 127 #0000ff v
program 163 222 89 #7a7a20
needs 202 222 98 #b0d0e8
federal 160 232 114 #3a6298
united 103 152 102 #6a2c98 v
americans 109 158 91 #c0aa98 v
major 66 85 124 #706090
billion 129 151 79 #26a9ff v
union 139 159 69 #b5f03c v
new 119 194 151 #33c033 v
work 120 136 179 #00ff00 v
energy 139 184 183 #cd8570 v
states 117 179 194 #b5f03c v
million 214 238 124 #6a2c98
nations 127 168 213 #b8c4a8 v
security 229 258 133 #7b3bff
economic 137 183 229 #1010ff v
provide 241 267 154 #c8a8cc
people 29 125 181 #7b3bff
budget 52 77 191 #206b36
country 97 123 194 #ffa500
war 99 123 205 #b0cfe4
years 197 268 77 #ffa500 v
year 211 275 106 #ff00ff v
percent 48 73 218 #7a7a20
state 60 75 242 #3a6298
better 250 269 65 #00ff00 v
progress 246 273 98 #00ff00 v
act 225 238 130 #ff40c0 v
increase 242 269 130 #cd8570 v
national 222 273 141 #7a5a10 v
america 197 266 156 #206b36 v
world 192 273 174 #26a9ff v
nation 193 243 194 #a0186a v
american 173 274 211 #ff1493 v
soviet 230 250 198 #a0186a
help 205 231 236 #45a598 v
time 243 273 229 #706090 v
government 76 248 295 #20ffff
peace 96 142 308 #00ff00
past 163 178 300 #7a5200
economy 192 222 300 #b8c4a8
programs 107 168 319 #c8a8cc
president 113 145 331 #20ffff
health 153 174 329 #45a598`
};
document.querySelectorAll("[data-cloud]").forEach(svg => {
  clouds[svg.dataset.cloud].split("\n").forEach(row => {
    const [word, a, b, base, fill, down] = row.split(" ");
    const mid = (+a + +b) / 2;
    const t = add(svg, "text", { fill, "text-anchor": "middle", "font-size": 100,
      transform: down ? `translate(${base} ${mid}) rotate(90)` : `translate(${mid} ${base})` }, word);
    t.setAttribute("font-size", Math.round(100 * (b - a) / t.getComputedTextLength()));
  });
});

// Bubbles: word, centre x, centre y, radius, grey level (all lengths in thirds of a unit).
const berries = {
left: `act 415 112 40 230,state 510 112 40 220,way 603 111 40 230,administration 196 184 40 250,income 281 184 40 242,international 366 184 40 236,future 463 187 41 228,business 558 186 40 230,action 652 183 40 224,provide 150 258 40 226,problems 236 259 40 230,past 323 260 41 220,legislation 412 259 42 238,long 511 262 42 227,labor 608 258 41 230,policy 697 258 41 228,help 785 256 41 228,tax 105 339 40 241,life 191 334 40 227,today 279 336 41 220,progress 368 337 42 220,public 460 336 43 236,production 564 337 43 229,country 655 336 42 224,economy 743 336 42 240,effort 832 333 41 230,good 142 417 41 221,billion 231 412 42 248,forces 322 415 42 232,freedom 413 417 43 227,security 511 415 44 225,american 612 417 44 226,make 705 417 43 222,expenditures 797 415 42 254,development 882 429 40 233,hope 94 489 39 226,men 181 498 42 221,defense 272 495 43 234,million 367 498 44 229,years 461 498 45 228,economic 561 499 47 230,shall 660 498 45 221,dollars 755 497 44 246,present 846 510 41 222,programs 132 571 40 254,fiscal 220 579 41 252,time 313 580 45 220,states 410 581 45 222,program 509 583 47 228,national 613 586 48 221,free 714 585 46 231,power 810 595 45 226,use 899 580 40 229,means 85 642 40 229,continue 172 655 41 230,work 262 660 43 223,great 356 668 45 224,new 455 670 49 222,year 560 672 50 226,nations 664 673 49 225,peace 767 682 48 221,resources 860 671 41 231,private 125 729 40 231,need 214 735 43 228,military 304 747 43 238,federal 400 754 44 236,world 504 767 53 221,war 614 767 51 229,united 719 772 48 222,increase 813 766 40 233,strength 262 829 42 236,nation 355 842 46 222,people 455 862 50 221,government 561 861 51 224,congress 665 861 49 225`,
right: `problems 413 96 39 225,public 504 94 39 226,human 587 96 39 231,international 367 166 40 231,development 459 166 40 220,long 544 168 40 222,u.s 630 168 40 254,foreign 234 235 40 228,needs 320 237 40 221,percent 412 239 41 227,past 502 240 41 222,tax 588 240 41 236,legislation 672 240 40 228,growth 757 241 40 223,inflation 103 301 39 227,progress 190 307 41 225,health 276 312 41 227,policy 364 313 43 224,state 455 315 42 223,million 546 315 41 228,provide 633 316 41 224,better 719 318 41 222,let 805 323 39 225,major 139 380 41 226,billion 226 387 42 230,make 316 390 43 223,programs 409 393 44 225,security 500 391 43 225,president 590 393 43 222,budget 678 394 42 226,support 766 399 40 226,meet 850 400 40 224,increase 86 475 41 222,nations 174 462 43 222,war 266 467 43 226,peace 360 473 44 222,energy 458 472 43 236,americans 550 472 43 223,act 641 474 43 223,soviet 729 477 41 230,nuclear 815 477 40 231,administration 118 558 43 233,united 211 548 44 221,america 306 553 45 221,nation 410 554 45 222,great 504 552 44 221,help 598 555 44 225,work 688 555 42 222,tonight 773 550 40 233,today 858 547 39 223,american 154 647 47 223,world 255 637 49 221,people 358 639 50 221,states 458 638 47 222,time 555 638 45 222,country 645 633 42 223,economy 733 630 42 223,nation's 818 622 39 227,federal 201 734 47 222,congress 304 729 51 221,new 411 729 50 221,national 509 719 45 224,economic 602 718 44 226,union 691 709 43 225,rights 777 703 40 225,resources 861 695 39 222,government 253 820 49 223,year 358 819 50 222,years 461 820 49 223,program 557 800 44 224,continue 648 795 42 223,future 734 785 40 229,efforts 410 899 40 229,need 529 884 40 222,hope 612 874 39 224`
};
document.querySelectorAll("[data-berry]").forEach(svg => {
  const side = svg.dataset.berry;
  berries[side].split(",").forEach((row, i) => {
    const [word, x, y, r, g] = row.split(" ");
    const cx = x / 3, cy = y / 3, id = `berry-${side}-${i}`;
    add(add(svg, "clipPath", { id }), "circle", { cx, cy, r: r / 3 });
    add(svg, "circle", { cx, cy, r: r / 3, fill: `rgb(${g},${g},${g})`, stroke: "#d8d8d8" });
    add(svg, "text", { x: cx, y: cy + 2, "text-anchor": "middle", "clip-path": `url(#${id})`,
      "font-size": Math.round((r / 3 - 13) * 1.25 + 7) }, word);
  });
});

// Trend lines: values are relative frequencies in thousandths.
const trends = {
left: { max: 14, x0: 79, step: 7.48, colour: ["#b3c5ae", "#8fab88"], slope: 30,
  world: [3.2,2.3,2.2,5.3,6.1,4.9,6,3.5,2.9,4.4,2.3,2,6,3.7,1.7,3.2,9.3,6.3,4.8,4.8,1.6,2.1,1.9,3.4,6,4.1,5.4,8,6.3,9.8,5.8],
  war: [.7,.4,1,.7,2,1.2,1.4,1,1.2,1.5,0,0,2.4,1.5,.2,1.3,2.8,4.8,8.8,9.8,12.8,9.2,7.2,3.6,2.3,0,.4,1.8,2.4,5.3,2.9],
  labels: [["1)Eisenhower…",120,307],["7)Eisenhower…",165,307],["13)Roosevelt_…",210,307],["18)Roosevelt_…",248,307],["24)Truman_194…",297,305],["30)Truman_195…",342,305]] },
right: { max: 10, x0: 81, step: 12.22, colour: ["#c5b09c", "#ad9078"], slope: 30,
  world: [5,8.24,7.27,2.23,6,2.77,2.76,.39,1.84,4.27,3.17,1.23,1.61,3.13,4.67,1.3,4.23,2.97,4.23],
  war: [1.06,.89,1.14,.71,.46,1.17,1.69,3.43,2.16,.87,2.23,2.76,1.4,.7,3.33,.86,1.99,.59,1.53],
  labels: [["1)Carter_197…",121,307],["5)Ford_1975",164,310],["9)Johnson_19…",221,306],["13)Johnson_19…",273,305],["17)Nixon_1972",315,307]] }
};
document.querySelectorAll("[data-chart]").forEach(svg => {
  const d = trends[svg.dataset.chart];
  const yOf = v => 285 - v * 233 / d.max;
  add(svg, "rect", { x: 90.5, y: 8.5, width: 142, height: 24, rx: 3, fill: "#fff", stroke: "#ccc" });
  add(svg, "path", { d: "M167.5 9v24", stroke: "#ccc" });
  const series = [["world", d.colour, 109, 120], ["war", ["#e6c778", "#dcae3c"], 186, 198]];
  series.forEach(([name, c, cx, tx]) => {
    add(svg, "circle", { cx, cy: 20.5, r: 6, fill: c[0], stroke: c[1] });
    add(svg, "text", { x: tx, y: 26, "font-size": 16, fill: "#444" }, name);
  });
  for (let v = 0; v <= d.max; v += 2) {
    const y = Math.round(yOf(v)) + .5;
    add(svg, "path", { d: `M69 ${y}h6`, stroke: "#222" });
    add(svg, "text", { x: 68, y: y + 3, "font-size": 12, "text-anchor": "end", fill: "#111" }, "0.0" + String(v).padStart(2, "0"));
  }
  add(svg, "path", { d: "M74.5 52v232.500h233", fill: "none", stroke: "#000" });
  add(svg, "text", { transform: "translate(34 169) rotate(-90)", "font-size": 15, "text-anchor": "middle", fill: "#111" }, "Relative Frequencies");
  add(svg, "text", { x: 191, y: 369, "font-size": 15, "text-anchor": "middle", fill: "#111" }, "Corpus (Documents)");
  const id = "plot-" + svg.dataset.chart;
  add(add(svg, "clipPath", { id }), "rect", { x: 75, y: 40, width: 232, height: 245 });
  const plot = add(svg, "g", { "clip-path": `url(#${id})` });
  series.forEach(([name, c]) => {
    const p = d[name].map((v, i) => [d.x0 + i * d.step, yOf(v)]);
    p.forEach(([x, y]) => add(plot, "path", { d: `M${x - 1.5} ${y}V284M${x + 1.5} ${y}V284`, stroke: c[1], "stroke-opacity": .2 }));
    let path = `M${p[0]}`;
    for (let i = 0; i < p.length - 1; i++) {
      const a = p[i - 1] || p[i], b = p[i], e = p[i + 1], f = p[i + 2] || e;
      path += `C${b[0] + (e[0] - a[0]) / 7},${b[1] + (e[1] - a[1]) / 7} ${e[0] - (f[0] - b[0]) / 7},${e[1] - (f[1] - b[1]) / 7} ${e}`;
    }
    add(plot, "path", { d: path, fill: "none", stroke: c[1], "stroke-width": 1.2 });
    p.forEach(([cx, cy]) => add(plot, "circle", { cx, cy, r: 5, fill: c[0], stroke: c[1] }));
  });
  d.world.forEach((v, i) => add(svg, "path", { d: `M${Math.round(d.x0 + i * d.step) + .5} 285v5`, stroke: "#000" }));
  d.labels.forEach(([text, x, y]) => add(svg, "text", { transform: `translate(${x} ${y}) rotate(-${d.slope})`, "font-size": 12, "text-anchor": "end", fill: "#111" }, text));
});
```
